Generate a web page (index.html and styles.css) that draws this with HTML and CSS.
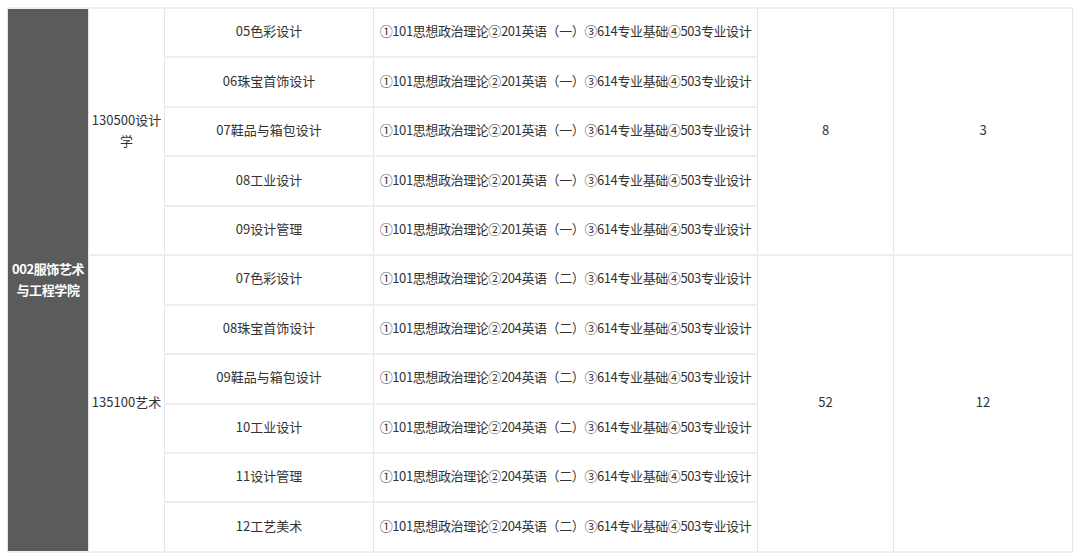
FILE: index.html
```html
<!DOCTYPE html>
<html lang="zh-CN">
<head>
    <meta charset="UTF-8">
    <meta name="viewport" content="width=device-width, initial-scale=1.0">
    <title>招生专业目录</title>
    <link rel="stylesheet" href="styles.css">
</head>
<body>
    <table class="catalog">
        <colgroup>
            <col class="col-school">
            <col class="col-major">
            <col class="col-dir">
            <col class="col-exam">
            <col class="col-plan">
            <col class="col-exempt">
        </colgroup>
        <tbody>
            <tr>
                <td class="school" rowspan="11">002服饰艺术<br>与工程学院</td>
                <td class="major" rowspan="5">130500设计学</td>
                <td>05色彩设计</td>
                <td class="exam">①101思想政治理论②201英语（一）③614专业基础④503专业设计</td>
                <td rowspan="5">8</td>
                <td rowspan="5">3</td>
            </tr>
            <tr>
                <td>06珠宝首饰设计</td>
                <td class="exam">①101思想政治理论②201英语（一）③614专业基础④503专业设计</td>
            </tr>
            <tr>
                <td>07鞋品与箱包设计</td>
                <td class="exam">①101思想政治理论②201英语（一）③614专业基础④503专业设计</td>
            </tr>
            <tr>
                <td>08工业设计</td>
                <td class="exam">①101思想政治理论②201英语（一）③614专业基础④503专业设计</td>
            </tr>
            <tr>
                <td>09设计管理</td>
                <td class="exam">①101思想政治理论②201英语（一）③614专业基础④503专业设计</td>
            </tr>
            <tr>
                <td class="major" rowspan="6">135100艺术</td>
                <td>07色彩设计</td>
                <td class="exam">①101思想政治理论②204英语（二）③614专业基础④503专业设计</td>
                <td rowspan="6">52</td>
                <td rowspan="6">12</td>
            </tr>
            <tr>
                <td>08珠宝首饰设计</td>
                <td class="exam">①101思想政治理论②204英语（二）③614专业基础④503专业设计</td>
            </tr>
            <tr>
                <td>09鞋品与箱包设计</td>
                <td class="exam">①101思想政治理论②204英语（二）③614专业基础④503专业设计</td>
            </tr>
            <tr>
                <td>10工业设计</td>
                <td class="exam">①101思想政治理论②204英语（二）③614专业基础④503专业设计</td>
            </tr>
            <tr>
                <td>11设计管理</td>
                <td class="exam">①101思想政治理论②204英语（二）③614专业基础④503专业设计</td>
            </tr>
            <tr>
                <td>12工艺美术</td>
                <td class="exam">①101思想政治理论②204英语（二）③614专业基础④503专业设计</td>
            </tr>
        </tbody>
    </table>
</body>
</html>
```

FILE: styles.css
```css
body {
    margin: 7px;
    background-color: #fff;
    font-family: "Noto Sans CJK SC", "Noto Sans", sans-serif;
    font-size: 13px;
    color: #333;
}
.catalog {
    width: 1065px;
    border-collapse: collapse;
    table-layout: fixed;
}
.col-school { width: 81px; }
.col-major { width: 76px; }
.col-dir { width: 209px; }
.col-exam { width: 384px; }
.col-plan { width: 136px; }
.col-exempt { width: 179px; }
.catalog tr {
    height: 49.45px;
}
.catalog td {
    border-top: 2px solid #eeeeee;
    border-bottom: 2px solid #eeeeee;
    border-left: 1px solid #e4e4e4;
    border-right: 1px solid #e4e4e4;
    padding: 0 2px 4px;
    text-align: center;
    vertical-align: middle;
    line-height: 21px;
    white-space: normal;
}
.catalog td.exam {
    white-space: nowrap;
    padding: 0 0 4px 0;
    letter-spacing: -0.4px;
}
.catalog td.school {
    background-color: #5b5b5b;
    color: #fff;
    font-weight: bold;
    white-space: nowrap;
    letter-spacing: -0.4px;
    padding: 0 0 2px;
}
.catalog td.major {
    padding: 0 1px 4px;
}
```
